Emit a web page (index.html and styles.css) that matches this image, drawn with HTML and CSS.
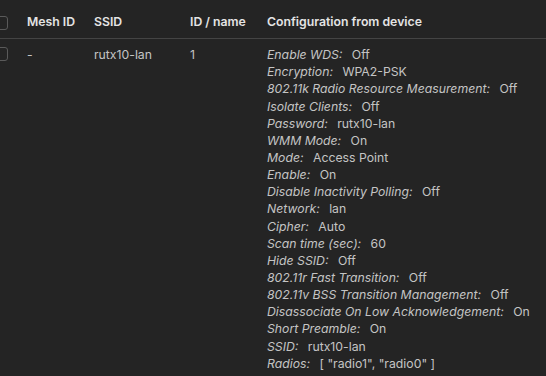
FILE: index.html
```html
<!DOCTYPE html>
<html lang="en">
<head>
  <meta charset="UTF-8">
  <meta name="viewport" content="width=device-width, initial-scale=1.0">
  <title>Wireless interfaces</title>
  <link rel="stylesheet" href="styles.css">
</head>
<body>
  <div class="table-wrap">
    <table class="iface-table">
      <colgroup>
        <col class="col-check">
        <col class="col-mesh">
        <col class="col-ssid">
        <col class="col-id">
        <col class="col-config">
      </colgroup>
      <thead>
        <tr>
          <th><span class="check"></span></th>
          <th>Mesh ID</th>
          <th>SSID</th>
          <th>ID / name</th>
          <th>Configuration from device</th>
        </tr>
      </thead>
      <tbody>
        <tr>
          <td><span class="check"></span></td>
          <td>-</td>
          <td>rutx10-lan</td>
          <td>1</td>
          <td>
            <ul class="config-list">
              <li><span class="config-key">Enable WDS:</span> Off</li>
              <li><span class="config-key">Encryption:</span> WPA2-PSK</li>
              <li><span class="config-key">802.11k Radio Resource Measurement:</span> Off</li>
              <li><span class="config-key">Isolate Clients:</span> Off</li>
              <li><span class="config-key">Password:</span> rutx10-lan</li>
              <li><span class="config-key">WMM Mode:</span> On</li>
              <li><span class="config-key">Mode:</span> Access Point</li>
              <li><span class="config-key">Enable:</span> On</li>
              <li><span class="config-key">Disable Inactivity Polling:</span> Off</li>
              <li><span class="config-key">Network:</span> lan</li>
              <li><span class="config-key">Cipher:</span> Auto</li>
              <li><span class="config-key">Scan time (sec):</span> 60</li>
              <li><span class="config-key">Hide SSID:</span> Off</li>
              <li><span class="config-key">802.11r Fast Transition:</span> Off</li>
              <li><span class="config-key">802.11v BSS Transition Management:</span> Off</li>
              <li><span class="config-key">Disassociate On Low Acknowledgement:</span> On</li>
              <li><span class="config-key">Short Preamble:</span> On</li>
              <li><span class="config-key">SSID:</span> rutx10-lan</li>
              <li><span class="config-key">Radios:</span> [ "radio1", "radio0" ]</li>
            </ul>
          </td>
        </tr>
      </tbody>
    </table>
  </div>
</body>
</html>
```

FILE: styles.css
```css
body {
  margin: 0;
  background-color: #242424;
  color: #c4c4c4;
  font-family: Inter, "Noto Sans", sans-serif;
  font-size: 12.25px;
  line-height: 1.4;
  overflow: hidden;
}

.table-wrap {
  margin-left: -16px;
}

.iface-table {
  border-collapse: collapse;
  table-layout: fixed;
  width: 562px;
}

.col-check {
  width: 33px;
}

.col-mesh {
  width: 67px;
}

.col-ssid {
  width: 96px;
}

.col-id {
  width: 77px;
}

.iface-table th {
  text-align: left;
  font-weight: 600;
  color: #e4e4e4;
  padding: 13px 10px 8px;
  border-bottom: 1px solid #444;
  white-space: nowrap;
}

.iface-table td {
  vertical-align: top;
  padding: 7px 10px;
  white-space: nowrap;
}

.check {
  display: block;
  width: 12px;
  height: 12px;
  border: 1px solid #5a5a5a;
  border-radius: 3px;
}

.iface-table th .check {
  margin-top: 2px;
}

.iface-table td .check {
  margin-top: 1px;
}

.config-list {
  list-style: none;
  margin: 0;
  padding: 0;
}

.config-key {
  font-style: italic;
  margin-right: 6px;
}
```
